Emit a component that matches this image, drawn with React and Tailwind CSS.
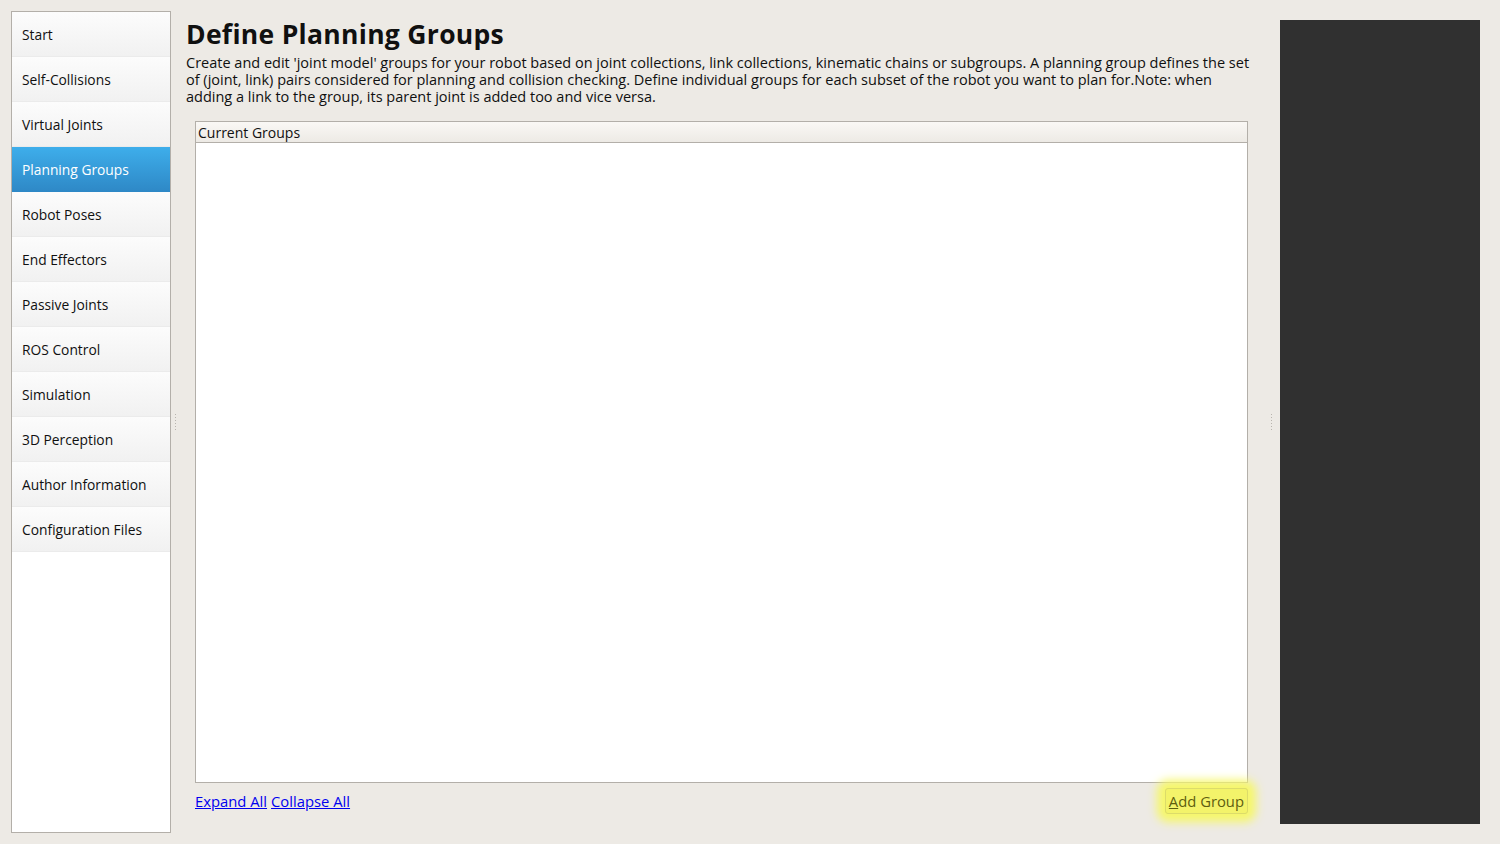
import React from 'react';

const NAV = [
  'Start',
  'Self-Collisions',
  'Virtual Joints',
  'Planning Groups',
  'Robot Poses',
  'End Effectors',
  'Passive Joints',
  'ROS Control',
  'Simulation',
  '3D Perception',
  'Author Information',
  'Configuration Files',
];

function SplitHandle() {
  return (
    <div className="flex w-[9px] shrink-0 flex-col items-center justify-center gap-[2px]">
      {[0, 1, 2, 3, 4, 5].map(i => (
        <span key={i} className="h-[1px] w-[1px] bg-[#b8b4ae]" />
      ))}
    </div>
  );
}

export default function App() {
  return (
    <div
      className="flex h-[844px] w-[1500px] bg-[#edeae5] text-[#101010]"
      style={{ fontFamily: '"Open Sans", "Noto Sans", sans-serif' }}
    >
      {/* sidebar */}
      <div className="ml-[11px] mt-[11px] mb-[11px] flex w-[160px] shrink-0 flex-col border border-[#b3afa9] bg-white">
        {NAV.map(label => {
          const active = label === 'Planning Groups';
          return (
            <div
              key={label}
              className={
                active
                  ? 'flex h-[45px] items-center bg-gradient-to-b from-[#3eaeeb] to-[#2e88c6] pl-[10px] pt-[1px] text-[13.8px] text-white'
                  : 'flex h-[45px] items-center border-b border-[#ebebeb] bg-gradient-to-b from-[#fcfcfc] to-[#f1f1f1] pl-[10px] pt-[3px] text-[13.8px]'
              }
            >
              {label}
            </div>
          );
        })}
      </div>

      <SplitHandle />

      {/* main content */}
      <div className="flex min-w-0 flex-1 flex-col pt-[18px] pb-[30px] pl-[6px] pr-[4px]">
        <h1 className="text-[26.5px] font-bold leading-[32px] tracking-[0.3px]">Define Planning Groups</h1>
        <p className="mt-[4px] mr-[12px] text-[14.5px] leading-[17px]">
          Create and edit 'joint model' groups for your robot based on joint collections, link collections, kinematic chains or subgroups. A planning group defines the set of (joint, link) pairs considered for planning and collision checking. Define individual groups for each subset of the robot you want to plan for.Note: when adding a link to the group, its parent joint is added too and vice versa.
        </p>

        <div className="ml-[9px] mr-[15px] mt-[16px] flex flex-1 flex-col border border-[#b3afa9] bg-white">
          <div className="flex h-[21px] items-center border-b border-[#b3afa9] bg-gradient-to-b from-[#faf8f5] to-[#edeae5] pl-[2px] text-[14px]">
            Current Groups
          </div>
          <div className="flex-1" />
        </div>

        <div className="ml-[9px] mr-[15px] mt-[5px] flex items-center justify-between">
          <div className="flex gap-[4px] text-[14.8px] text-[#0000ee]">
            <span className="underline">Expand All</span>
            <span className="underline">Collapse All</span>
          </div>
          <div className="rounded-[4px] bg-[#f4f55a] shadow-[0_0_10px_8px_#f6f76a]">
            <div className="flex h-[26px] items-center rounded-[3px] border border-[#dcdc6a] bg-[#f3f36a] px-[3px] text-[14.8px] text-[#5e5e10]">
              <span className="underline">A</span>dd Group
            </div>
          </div>
        </div>
      </div>

      <SplitHandle />

      {/* right dark panel */}
      <div className="my-[20px] ml-[4px] mr-[20px] w-[200px] shrink-0 bg-[#303030]" />
    </div>
  );
}
